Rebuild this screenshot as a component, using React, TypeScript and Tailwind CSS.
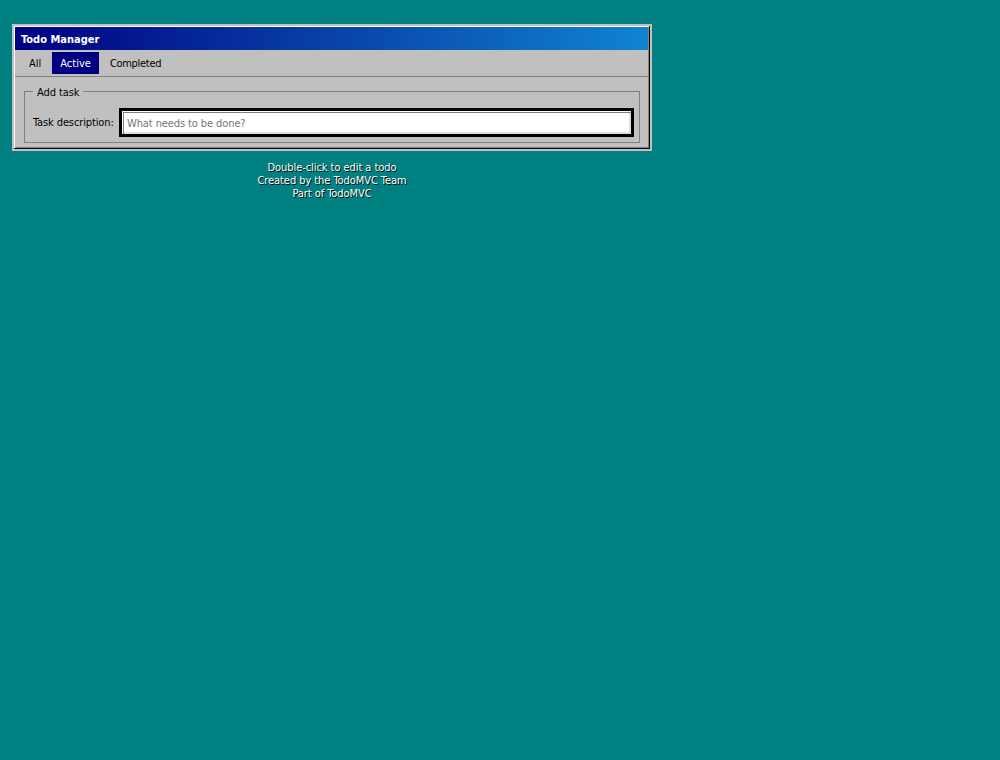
export default function App() {
  return (
    <div className="min-h-[760px] bg-[#008080] px-3 pt-6 font-['DejaVu_Sans',sans-serif] text-[11px] leading-[13px] text-black font-stretch-condensed">
      <div className="w-[640px] border-2 border-[#c0c0c0] bg-[#c0c0c0] pt-[1px] pr-[2px] pb-[2px] pl-[1px] shadow-[inset_-1px_-1px_#0a0a0a,inset_1px_1px_#ffffff,inset_-2px_-2px_#808080]">
        <div className="flex h-[23px] items-center bg-linear-to-r/srgb from-[#000080] to-[#1084d0] pt-[2px] pl-[6px] font-bold text-white">
          Todo Manager
        </div>
        <div className="flex h-[27px] items-start gap-[3px] border-b border-[#808080] pt-[2px] pl-[6px]">
          <div className="flex h-[22px] items-center px-[8px]">All</div>
          <div className="flex h-[22px] items-center bg-[#000080] px-[8px] text-white">Active</div>
          <div className="flex h-[22px] items-center px-[8px] tracking-[-0.3px]">Completed</div>
        </div>
        <div className="pt-[9px] pr-[8px] pb-[4px] pl-[9px]">
          <fieldset className="border border-[#808080] px-[8px] pt-[14px] pb-[8px]">
            <legend className="h-[11px] px-[4px] tracking-[-0.1px]">Add task</legend>
            <div className="flex items-center gap-[5px]">
              <label className="w-[84px] tracking-[-0.12px]">Task description:</label>
              <input
                placeholder="What needs to be done?"
                className="block h-[23px] min-w-0 flex-1 bg-white pt-[2px] pr-[3px] pl-[5px] text-[11px] tracking-[-0.1px] outline-[3px] outline-black placeholder:text-[#757575] shadow-[inset_1px_1px_#ffffff,inset_2px_2px_#808080,inset_-2px_-2px_#dfdfdf]"
              />
            </div>
          </fieldset>
        </div>
      </div>
      <div className="mt-[10px] w-[640px] text-center tracking-[-0.06px] text-white [text-shadow:1px_1px_0_#000]">
        <p>Double-click to edit a todo</p>
        <p>Created by the TodoMVC Team</p>
        <p>Part of TodoMVC</p>
      </div>
    </div>
  );
}
